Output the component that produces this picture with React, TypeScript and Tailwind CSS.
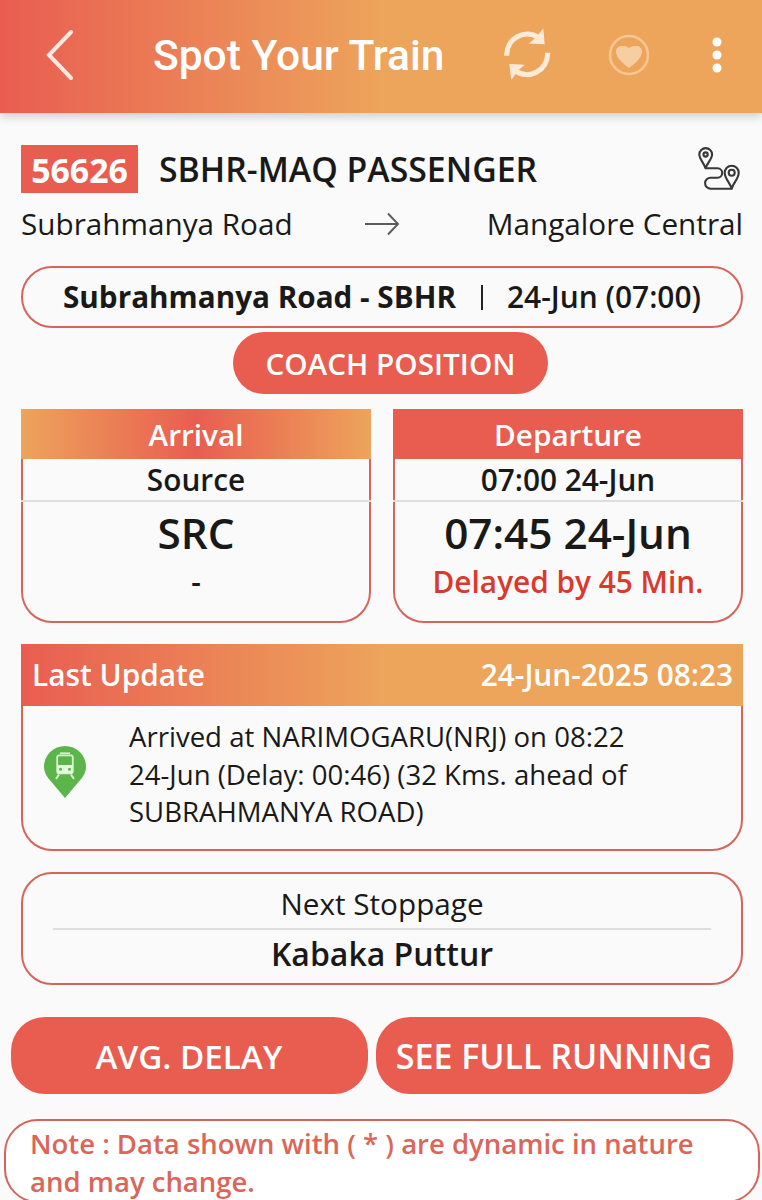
import React from 'react';

function RefreshIcon() {
  return (
    <svg width="48" height="54" viewBox="0 0 48 54" fill="none">
      <path d="M3.700 27.700V26.500A20.600 20.800 0 0 1 35.500 9.500" stroke="#fdebd7" strokeWidth="5.200" />
      <path d="M40.300 0.500L41.700 16.200L26 15.500L33 9.500Z" fill="#fdebd7" />
      <path d="M44.600 24.700V26A20.600 20.800 0 0 1 12.500 43" stroke="#fdebd7" strokeWidth="5.200" />
      <path d="M6.300 36L21.700 36.700L15 42.500L8.300 52Z" fill="#fdebd7" />
    </svg>
  );
}

function HeartIcon() {
  return (
    <svg width="42" height="42" viewBox="0 0 42 42" fill="none">
      <circle cx="21" cy="21" r="19" stroke="#f7c693" strokeWidth="2.600" />
      <path d="M21 34C19.500 33 8 25 8 17.500C8 14 10.500 12 14 12C17.500 12 20 12.300 21 14.500C22 12.300 24.500 12 28 12C31.500 12 34 14 34 17.500C34 25 22.500 33 21 34Z" fill="#f7cda2" />
    </svg>
  );
}

function RouteIcon() {
  return (
    <svg width="44" height="46" viewBox="0 0 44 46" fill="none" stroke="#383838" strokeWidth="2.100" strokeLinejoin="round">
      <path d="M8.500 22.300C7.500 18 2.300 13 2.300 8.500A6.400 6.400 0 0 1 15.100 8.500C15.100 13 9.500 18 8.500 22.300Z" />
      <circle cx="8.600" cy="8.500" r="2.100" />
      <path d="M34.700 42.700C33.700 37.500 27.700 33 27.700 26.800A7 7 0 0 1 41.700 26.800C41.700 33 35.700 37.500 34.700 42.700Z" />
      <circle cx="34.700" cy="26.800" r="3" />
      <path d="M8.500 22.300H20.500A4.700 4.700 0 0 1 20.500 31.700H13.600A5.500 5.500 0 0 0 13.600 42.700H34.700" />
    </svg>
  );
}

function TrainPin() {
  return (
    <svg width="44" height="54" viewBox="0 0 44 54">
      <path d="M22 53L5.500 33.500C2.500 29.500 1 26 1 21.500A21 20.500 0 0 1 43 21.500C43 26 41.500 29.500 38.500 33.500Z" fill="#5cb54a" />
      <g fill="none" stroke="#d9f3d0">
        <rect x="14.200" y="10.300" width="15.600" height="18" rx="2" strokeWidth="1.800" />
        <path d="M17 8.200H27" strokeWidth="1.600" />
        <path d="M16 29.500L13 34M28 29.500L31 34" strokeWidth="2" />
      </g>
      <path d="M14.200 20H29.800V28H14.200Z" fill="#e3f8dc" />
      <circle cx="17.500" cy="24.300" r="1.500" fill="#5cb54a" />
      <circle cx="26.500" cy="24.300" r="1.500" fill="#5cb54a" />
    </svg>
  );
}

function StopCard({ title, head, scheduled, actual, status, statusClass }: {
  title: string; head: string; scheduled: string; actual: string; status: string; statusClass: string;
}) {
  return (
    <section className="h-[214px] w-[350px] text-center font-semibold">
      <h2 className={`h-[50px] text-[29.700px] leading-[52px] text-white ${head}`}>{title}</h2>
      <div className="h-[41px] border-x-2 border-[#d5645c] text-[29.800px] leading-[41px]">{scheduled}</div>
      <div className="h-[2px] bg-[#dedede]" />
      <div className="h-[121px] rounded-b-[31px] border-x-2 border-b-2 border-[#d5645c]">
        <div className="h-[59px] text-[42.300px] leading-[61px]">{actual}</div>
        <div className={`text-[29.800px] leading-[42px] ${statusClass}`}>{status}</div>
      </div>
    </section>
  );
}

export default function App() {
  return (
    <main className="flex h-[1200px] w-[762px] flex-col overflow-hidden bg-[#fafafa] font-['Open_Sans',sans-serif] whitespace-nowrap text-[#191919]">
      <header className="flex h-[113px] shrink-0 items-center bg-[linear-gradient(90deg,#e95d51_0%,#eda45b_50%)] pb-[4px] shadow-[0_3px_10px_rgba(0,0,0,0.2)]">
        <svg className="ml-[45px]" width="30" height="52" viewBox="0 0 30 52" fill="none">
          <path d="M26 3L4 26L26 49" stroke="#ffe9e1" strokeWidth="4" strokeLinecap="round" />
        </svg>
        <h1 className="ml-[78px] w-[350px] pt-[2px] font-['Roboto',sans-serif] text-[42.500px] leading-[50px] font-medium text-white">Spot Your Train</h1>
        <div className="flex items-center">
          <RefreshIcon />
          <span className="ml-[57px]"><HeartIcon /></span>
          <svg className="ml-[61px]" width="12" height="36" viewBox="0 0 12 36" fill="#fff">
            <circle cx="6" cy="5" r="4.500" />
            <circle cx="6" cy="18" r="4.500" />
            <circle cx="6" cy="31" r="4.500" />
          </svg>
        </div>
      </header>

      <div className="mt-[32px] flex h-[48px] shrink-0 items-center pl-[21px]">
        <span className="h-[48px] w-[117px] bg-[#e85d50] text-center text-[33.800px] leading-[50px] font-bold text-white">56626</span>
        <h2 className="ml-[21px] w-[538px] text-[33.800px] leading-[50px] font-semibold">SBHR-MAQ PASSENGER</h2>
        <RouteIcon />
      </div>

      <div className="mt-[9px] flex h-[44px] shrink-0 items-center pl-[21px] text-[29.700px] leading-[44px]">
        <span className="w-[343px]">Subrahmanya Road</span>
        <svg width="36" height="24" viewBox="0 0 36 24" fill="none" stroke="#5c5c5c" strokeWidth="1.900">
          <path d="M1 12H34M24 1.500L34 12L24 22.500" />
        </svg>
        <span className="ml-auto pr-[19px]">Mangalore Central</span>
      </div>

      <div className="mx-[21px] mt-[20px] flex h-[62px] w-[722px] shrink-0 items-center rounded-[31px] border-2 border-[#d5645c] pl-[40px] text-[30px] leading-[60px]">
        <b className="w-[418px] text-[29.700px] font-bold">Subrahmanya Road - SBHR</b>
        <span className="mr-[18px] h-[25px] w-[2px] bg-[#222]" />
        <span className="pl-[6px] text-[29.900px] font-semibold">24-Jun (07:00)</span>
      </div>

      <button className="mt-[4px] ml-[233px] h-[62px] w-[315px] shrink-0 rounded-[31px] bg-[#e85d50] text-[29.700px] leading-[64px] font-semibold text-white">COACH POSITION</button>

      <div className="mt-[15px] flex shrink-0 justify-between pr-[19px] pl-[21px]">
        <StopCard title="Arrival" head="bg-[linear-gradient(90deg,#eda45b,#e95d51_50%,#eda45b)]" scheduled="Source" actual="SRC" status="-" statusClass="" />
        <StopCard title="Departure" head="bg-[#e85d50]" scheduled="07:00 24-Jun" actual="07:45 24-Jun" status="Delayed by 45 Min." statusClass="text-[#d93a2d]" />
      </div>

      <section className="mx-[21px] mt-[21px] h-[207px] w-[722px] shrink-0">
        <div className="flex h-[62px] items-center justify-between bg-[linear-gradient(90deg,#e95d51_0%,#eda45b_50%)] pr-[10px] pl-[11px] text-[29.800px] leading-[64px] font-semibold text-white">
          <span>Last Update</span>
          <span>24-Jun-2025 08:23</span>
        </div>
        <div className="flex h-[145px] rounded-b-[31px] border-x-2 border-b-2 border-[#d5645c] pl-[20px]">
          <span className="w-[86px] pt-[39px]"><TrainPin /></span>
          <p className="pt-[12px] text-[27.550px] leading-[37.500px]">
            Arrived at NARIMOGARU(NRJ) on 08:22<br />24-Jun (Delay: 00:46) (32 Kms. ahead of<br />SUBRAHMANYA ROAD)
          </p>
        </div>
      </section>

      <section className="mx-[21px] mt-[21px] h-[113px] w-[722px] shrink-0 rounded-[31px] border-2 border-[#d5645c] px-[30px] pt-[4px] text-center">
        <div className="h-[50px] text-[29.700px] leading-[51px]">Next Stoppage</div>
        <div className="h-[2px] bg-[#dedede]" />
        <div className="text-[32px] leading-[47px] font-semibold">Kabaka Puttur</div>
      </section>

      <div className="mt-[32px] flex shrink-0 gap-[8px] pl-[10.500px] leading-[79px] font-semibold text-white">
        <button className="h-[77px] w-[357px] rounded-[34px] bg-[#e85d50] text-[33.200px]">AVG. DELAY</button>
        <button className="h-[77px] w-[357px] rounded-[34px] bg-[#e85d50] text-[34px]">SEE FULL RUNNING</button>
      </div>

      <p className="mt-[25px] ml-[4px] h-[84px] w-[756px] shrink-0 rounded-[34px] border-2 border-[#d5645c] bg-white pt-[4px] pl-[24px] text-[27.500px] leading-[37.500px] font-semibold text-[#dc655a]">
        Note : Data shown with ( * ) are dynamic in nature<br />and may change.
      </p>
    </main>
  );
}
